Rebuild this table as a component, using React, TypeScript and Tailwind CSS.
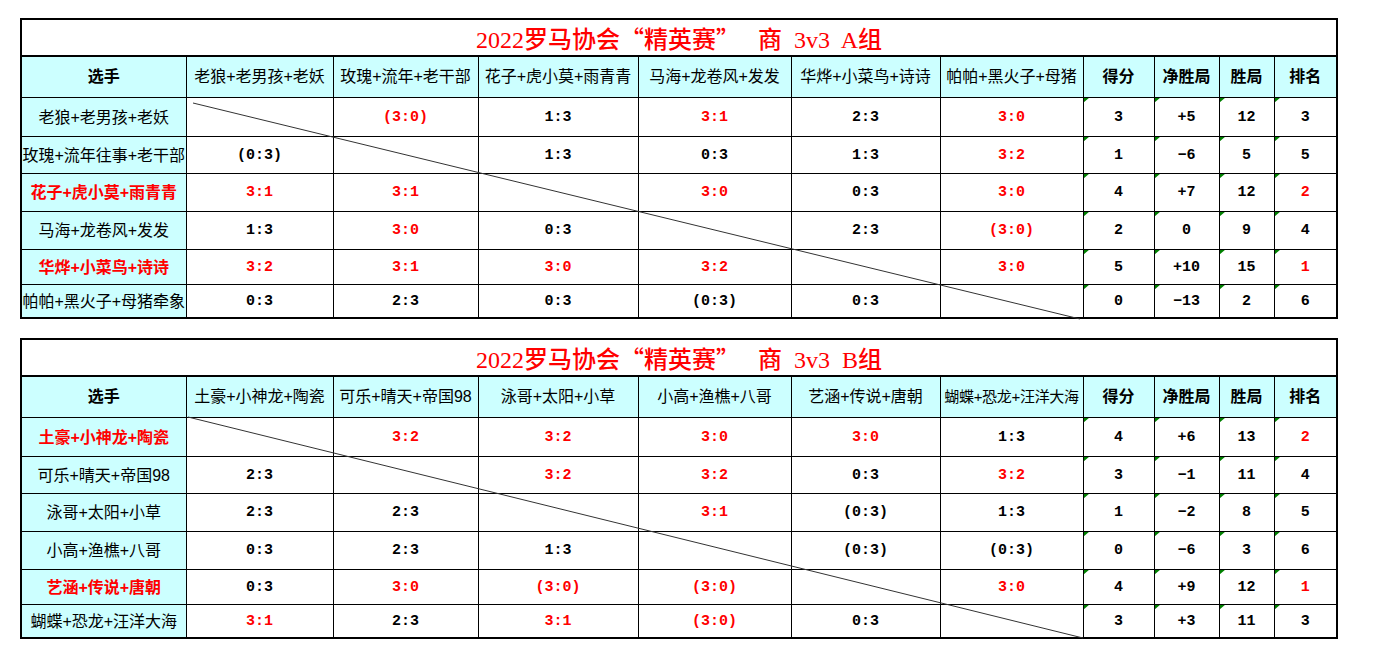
import React from "react";

type Row = { name: string; win?: boolean; cells: string[]; stats: string[] };

interface Group {
  letter: string;
  heads: string[];
  rows: Row[];
  line: [number, number, number, number];
}

const groupA: Group = {
  letter: "A",
  heads: [
    "老狼+老男孩+老妖",
    "玫瑰+流年+老干部",
    "花子+虎小莫+雨青青",
    "马海+龙卷风+发发",
    "华烨+小菜鸟+诗诗",
    "帕帕+黑火子+母猪",
  ],
  rows: [
    { name: "老狼+老男孩+老妖", cells: ["", "!(3:0)", "1:3", "!3:1", "2:3", "!3:0"], stats: ["3", "+5", "12", "3"] },
    { name: "玫瑰+流年往事+老干部", cells: ["(0:3)", "", "1:3", "0:3", "1:3", "!3:2"], stats: ["1", "−6", "5", "5"] },
    { name: "花子+虎小莫+雨青青", win: true, cells: ["!3:1", "!3:1", "", "!3:0", "0:3", "!3:0"], stats: ["4", "+7", "12", "!2"] },
    { name: "马海+龙卷风+发发", cells: ["1:3", "!3:0", "0:3", "", "2:3", "!(3:0)"], stats: ["2", "0", "9", "4"] },
    { name: "华烨+小菜鸟+诗诗", win: true, cells: ["!3:2", "!3:1", "!3:0", "!3:2", "", "!3:0"], stats: ["5", "+10", "15", "!1"] },
    { name: "帕帕+黑火子+母猪牵象", cells: ["0:3", "2:3", "0:3", "(0:3)", "0:3", ""], stats: ["0", "−13", "2", "6"] },
  ],
  line: [173, 85, 1060, 301],
};

const groupB: Group = {
  letter: "B",
  heads: [
    "土豪+小神龙+陶瓷",
    "可乐+晴天+帝国98",
    "泳哥+太阳+小草",
    "小高+渔樵+八哥",
    "艺涵+传说+唐朝",
    "蝴蝶+恐龙+汪洋大海",
  ],
  rows: [
    { name: "土豪+小神龙+陶瓷", win: true, cells: ["", "!3:2", "!3:2", "!3:0", "!3:0", "1:3"], stats: ["4", "+6", "13", "!2"] },
    { name: "可乐+晴天+帝国98", cells: ["2:3", "", "!3:2", "!3:2", "0:3", "!3:2"], stats: ["3", "−1", "11", "4"] },
    { name: "泳哥+太阳+小草", cells: ["2:3", "2:3", "", "!3:1", "(0:3)", "1:3"], stats: ["1", "−2", "8", "5"] },
    { name: "小高+渔樵+八哥", cells: ["0:3", "2:3", "1:3", "", "(0:3)", "(0:3)"], stats: ["0", "−6", "3", "6"] },
    { name: "艺涵+传说+唐朝", win: true, cells: ["0:3", "!3:0", "!(3:0)", "!(3:0)", "", "!3:0"], stats: ["4", "+9", "12", "!1"] },
    { name: "蝴蝶+恐龙+汪洋大海", cells: ["!3:1", "2:3", "!3:1", "!(3:0)", "0:3", ""], stats: ["3", "+3", "11", "3"] },
  ],
  line: [168, 79, 1063, 300],
};

const rowHeights = ["h-[39px]", "h-[37px]", "h-[38px]", "h-[38px]", "h-[35px]", "h-[34px]"];

const cjk = "font-['Liberation_Sans','Noto_Sans_CJK_SC',sans-serif]";
const mono = "font-['Liberation_Mono','Noto_Sans_CJK_SC',monospace] font-bold text-[15px]";

function Score({ v }: { v: string }) {
  const red = v.startsWith("!");
  return <span className={red ? "text-[#ff0000]" : "text-black"}>{red ? v.slice(1) : v}</span>;
}

function Title({ letter }: { letter: string }) {
  const cjkSpan = "font-['Noto_Sans_CJK_SC',serif]";
  return (
    <>
      2022罗马协会<span className={cjkSpan}>“</span>精英赛<span className={cjkSpan}>”</span>
      {"   "}商{"  "}3v3{"  "}
      {letter}组
    </>
  );
}

function ScoreTable({ g }: { g: Group }) {
  const [x1, y1, x2, y2] = g.line;
  return (
    <div className="relative ml-[20px] w-[1317px]">
      <table className="w-full table-fixed border-collapse border-2 border-black">
        <colgroup>
          <col className="w-[165px]" />
          <col className="w-[147px]" />
          <col className="w-[145px]" />
          <col className="w-[160px]" />
          <col className="w-[153px]" />
          <col className="w-[149px]" />
          <col className="w-[143px]" />
          <col className="w-[71px]" />
          <col className="w-[65px]" />
          <col className="w-[55px]" />
          <col className="w-[63px]" />
        </colgroup>
        <tbody>
          <tr className="h-[37px]">
            <td
              colSpan={11}
              className="border-b-2 border-black p-0 pt-[2px] text-center align-middle whitespace-pre text-[24px] leading-none text-[#ff0000] font-['Liberation_Serif','Noto_Sans_CJK_SC',serif] font-medium"
            >
              <Title letter={g.letter} />
            </td>
          </tr>
          {/* header */}
          <tr className={`h-[41px] bg-[#ccffff] ${cjk} text-[16px] text-black`}>
            <td className="border border-black p-0 text-center font-bold">选手</td>
            {g.heads.map((h, i) => (
              <td
                key={h}
                className={`border border-black p-0 text-center whitespace-nowrap overflow-hidden ${
                  i === 5 && h.length > 9 ? "text-[15px] tracking-[-0.3px]" : ""
                }`}
              >
                {h}
              </td>
            ))}
            <td className="border border-black p-0 text-center font-bold">得分</td>
            <td className="border border-black p-0 text-center font-bold">净胜局</td>
            <td className="border border-black p-0 text-center font-bold">胜局</td>
            <td className="border border-black p-0 text-center font-bold">排名</td>
          </tr>
          {g.rows.map((r, ri) => (
            <tr key={r.name} className={rowHeights[ri]}>
              <td
                className={`border border-black bg-[#ccffff] p-0 pt-[2px] text-center whitespace-nowrap overflow-hidden text-[16px] ${cjk} ${
                  r.win ? "font-bold text-[#ff0000]" : "text-black"
                }`}
              >
                {r.name}
              </td>
              {r.cells.map((c, ci) => (
                <td key={ci} className={`border border-black p-0 pt-[3px] text-center whitespace-nowrap ${mono}`}>
                  {c && <Score v={c} />}
                </td>
              ))}
              {r.stats.map((s, si) => (
                <td key={si} className={`relative border border-black p-0 pt-[3px] text-center ${mono}`}>
                  <span className="absolute left-0 top-0 h-[5px] w-[6px] bg-[#008000] [clip-path:polygon(0_0,100%_0,0_100%)]" />
                  <Score v={s} />
                </td>
              ))}
            </tr>
          ))}
        </tbody>
      </table>
      <svg className="pointer-events-none absolute left-0 top-0" width="1317" height="305">
        <line x1={x1} y1={y1} x2={x2} y2={y2} stroke="#333" strokeWidth="1" />
      </svg>
    </div>
  );
}

export default function App() {
  return (
    <div className="min-h-[659px] w-[1373px] bg-white pt-[18px]">
      <ScoreTable g={groupA} />
      <div className="h-[19px]" />
      <ScoreTable g={groupB} />
    </div>
  );
}
